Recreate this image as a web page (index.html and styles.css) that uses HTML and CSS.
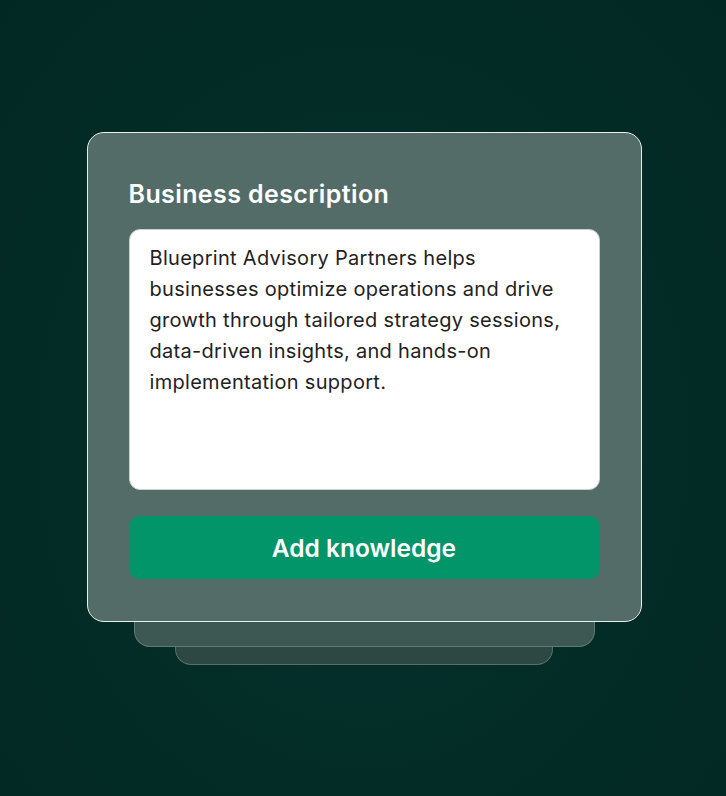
FILE: index.html
```html
<!DOCTYPE html>
<html lang="en">
<head>
<meta charset="utf-8">
<title>Business description</title>
<link rel="stylesheet" href="styles.css">
</head>
<body>
<main class="stage">
  <section class="card">
    <h1 class="title">Business description</h1>
    <div class="field">Blueprint Advisory Partners helps businesses optimize operations and drive growth through tailored strategy sessions, data-driven insights, and hands-on implementation support.</div>
    <button class="btn" type="button">Add knowledge</button>
  </section>
  <div class="layer layer-1"></div>
  <div class="layer layer-2"></div>
</main>
</body>
</html>
```
FILE: styles.css
```css
* { box-sizing: border-box; }
html, body { margin: 0; padding: 0; }
body {
  width: 726px;
  height: 796px;
  background: radial-gradient(ellipse at 50% 55%, #07342e 0%, #032c27 55%, #022823 100%);
  font-family: Inter, "Noto Sans", sans-serif;
  overflow: hidden;
}
.stage {
  height: 796px;
  display: flex;
  flex-direction: column;
  align-items: center;
  padding-top: 132px;
  padding-left: 2px;
}
.card {
  position: relative;
  z-index: 3;
  width: 555px;
  height: 490px;
  background: #536c67;
  border: 1.5px solid #e8eeec;
  border-radius: 17px;
  padding: 42px 41px 41px 41px;
  display: flex;
  flex-direction: column;
}
.title {
  margin: 0;
  color: #ffffff;
  font-size: 25px;
  font-weight: 600;
  line-height: 38px;
  letter-spacing: 0.4px;
}
.field {
  margin-top: 16px;
  height: 261px;
  background: #ffffff;
  border: 1.5px solid #c9d0ce;
  border-radius: 11px;
  padding: 13px 18px 13px 20px;
  color: #1f2221;
  font-size: 20px;
  line-height: 31px;
  letter-spacing: 0.3px;
}
.btn {
  margin-top: 26px;
  height: 63px;
  width: 100%;
  border: none;
  border-radius: 11px;
  background: #03956a;
  color: #ffffff;
  font-family: Inter, "Noto Sans", sans-serif;
  font-size: 24.5px;
  font-weight: 600;
  letter-spacing: 0;
}
.layer {
  border: 1px solid rgba(160, 190, 182, 0.35);
  border-top: none;
  border-radius: 0 0 16px 16px;
}
.layer-1 {
  z-index: 2;
  width: 461px;
  height: 26px;
  margin-top: -1px;
  background: #3d5753;
}
.layer-2 {
  z-index: 1;
  width: 378px;
  height: 18px;
  background: #2d4843;
}
```
